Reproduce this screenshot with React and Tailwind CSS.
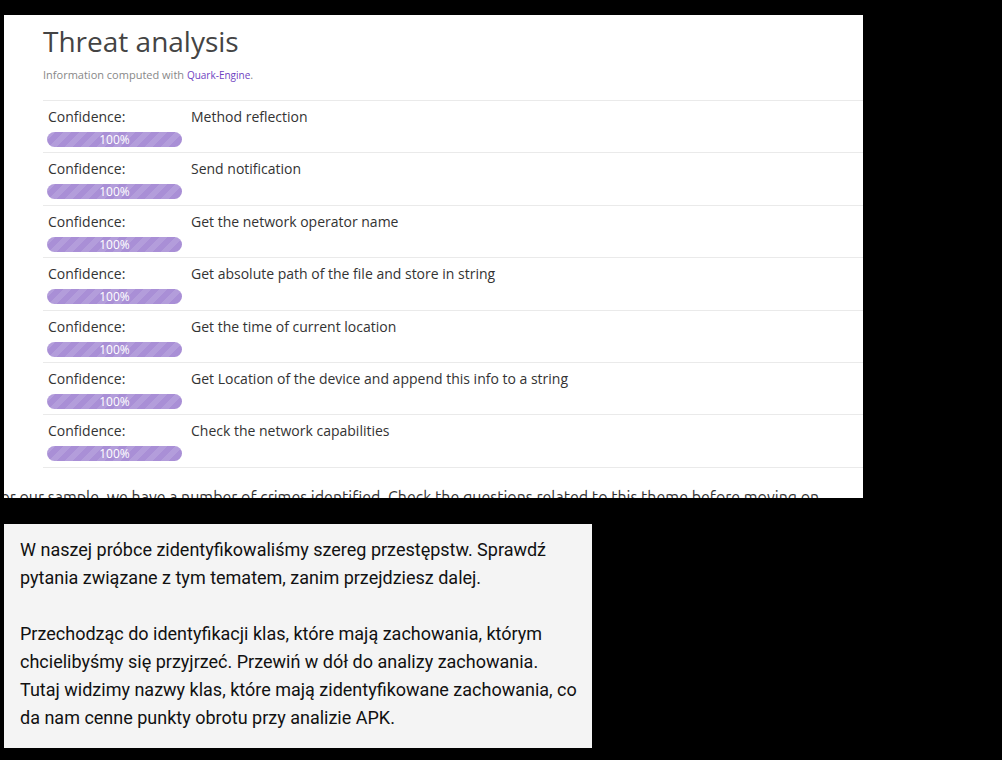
const rows = [
  "Method reflection",
  "Send notification",
  "Get the network operator name",
  "Get absolute path of the file and store in string",
  "Get the time of current location",
  "Get Location of the device and append this info to a string",
  "Check the network capabilities",
];

const ConfidenceBar = () => (
  <div className="h-[15px] w-[135px] rounded-full bg-[#a98fd6] bg-[linear-gradient(135deg,rgba(255,255,255,.12)_25%,transparent_25%,transparent_50%,rgba(255,255,255,.12)_50%,rgba(255,255,255,.12)_75%,transparent_75%,transparent)] bg-[length:16px_16px] text-center text-[12px] leading-[15px] text-white">
    100%
  </div>
);

export default function App() {
  return (
    <div className="h-[760px] w-[1002px] overflow-hidden bg-black pt-[15px]">
      {/* Screenshot of the report */}
      <div className="ml-[4px] h-[483px] w-[859px] overflow-hidden bg-white font-['Open_Sans',sans-serif]">
        <div className="pl-[39px]">
          <h2 className="pt-[9px] text-[28px] leading-[34px] text-[#444]">Threat analysis</h2>
          <p className="mt-[10px] text-[11px] leading-[14px] text-[#888]">
            Information computed with{" "}
            <span className="text-[10px] text-[#6f42c1]">Quark-Engine</span>.
          </p>
          <div className="mt-[18px] w-[900px] border-t border-[#eaeaea]">
            {rows.map((r) => (
              <div key={r} className="flex h-[52.4px] border-b border-[#eaeaea] pt-[6px] text-[14px] leading-[20px] text-[#333]">
                <div className="w-[148px] pl-[4px]">
                  <div className="pl-[1px]">Confidence:</div>
                  <div className="mt-[5px]">
                    <ConfidenceBar />
                  </div>
                </div>
                <div>{r}</div>
              </div>
            ))}
          </div>
        </div>
        <p className="ml-[-12px] mt-[19px] whitespace-nowrap font-['Ubuntu','Open_Sans',sans-serif] text-[16px] leading-[20px] text-[#333]">
          For our sample, we have a number of crimes identified. Check the questions related to this theme before moving on
        </p>
      </div>

      {/* Translation box */}
      <div className="ml-[4px] mt-[26px] w-[588px] bg-[#f4f4f4] pb-[16px] pl-[16px] pr-[13px] pt-[12px] font-['Roboto',sans-serif] text-[18px] leading-[28px] text-[#111]">
        <p>W naszej próbce zidentyfikowaliśmy szereg przestępstw. Sprawdź pytania związane z tym tematem, zanim przejdziesz dalej.</p>
        <p className="mt-[28px]">
          Przechodząc do identyfikacji klas, które mają zachowania, którym chcielibyśmy się przyjrzeć. Przewiń w dół do analizy zachowania. Tutaj widzimy nazwy klas, które mają zidentyfikowane zachowania, co da nam cenne punkty obrotu przy analizie APK.
        </p>
      </div>
    </div>
  );
}
